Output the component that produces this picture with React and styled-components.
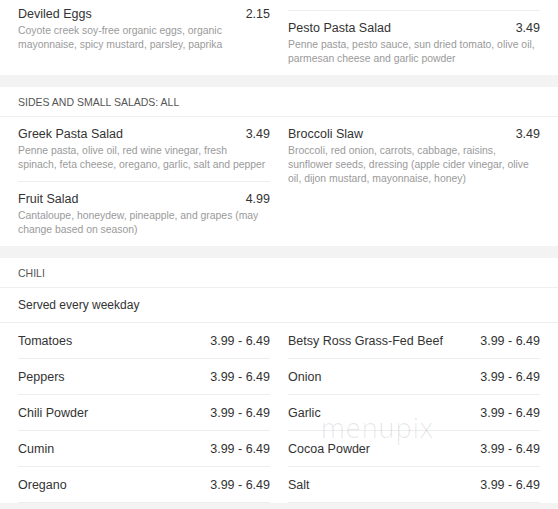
import React from "react";
import styled, { createGlobalStyle } from "styled-components";

const GlobalStyle = createGlobalStyle`
  html, body {
    margin: 0;
    padding: 0;
    background: #f3f3f3;
    font-family: "Liberation Sans", Arial, sans-serif;
    overflow: hidden;
  }
`;

const Page = styled.div`
  margin-top: -98px;
  display: flex;
  flex-direction: column;
  gap: 12px;
`;

const Card = styled.section`
  position: relative;
  background: #fff;
`;

const SectionTitle = styled.div`
  height: 29px;
  padding: 0 18px;
  display: flex;
  align-items: center;
  border-bottom: 1px solid #eeeeee;
  font-size: 10.5px;
  color: #555;
  text-transform: uppercase;
`;

const Note = styled.div`
  height: 34px;
  padding: 0 18px;
  display: flex;
  align-items: center;
  border-bottom: 1px solid #eeeeee;
  font-size: 12px;
  color: #333;
`;

const Columns = styled.div`
  display: grid;
  grid-template-columns: 1fr 1fr;
  column-gap: 18px;
  padding: 0 18px;
`;

const Column = styled.div`
  display: flex;
  flex-direction: column;
`;

const Item = styled.div`
  padding: 9px 0 9px;
  & + & {
    border-top: 1px solid #eeeeee;
  }
`;

const Row = styled.div`
  height: 35px;
  display: flex;
  align-items: center;
  justify-content: space-between;
  border-bottom: 1px solid #eeeeee;
  font-size: 12.5px;
  color: #333;
`;

const ItemHead = styled.div`
  display: flex;
  justify-content: space-between;
  font-size: 12.5px;
  line-height: 16px;
  color: #333;
`;

const Desc = styled.div`
  margin-top: 2px;
  font-size: 10.4px;
  line-height: 14px;
  white-space: pre-line;
  color: #9a9a9a;
`;

const Watermark = styled.div`
  position: absolute;
  left: 321px;
  top: 151px;
  font-family: "Open Sans", "Liberation Sans", sans-serif;
  font-weight: 300;
  font-size: 27px;
  letter-spacing: 1px;
  color: rgba(0, 0, 0, 0.1);
  pointer-events: none;
`;

const MenuItem = ({ name, price, desc }) => (
  <Item>
    <ItemHead>
      <span>{name}</span>
      <span>{price}</span>
    </ItemHead>
    {desc && <Desc>{desc}</Desc>}
  </Item>
);

const chiliLeft = ["Tomatoes", "Peppers", "Chili Powder", "Cumin", "Oregano"];
const chiliRight = ["Betsy Ross Grass-Fed Beef", "Onion", "Garlic", "Cocoa Powder", "Salt"];

export default function App() {
  return (
    <>
      <GlobalStyle />
      <Page>
        <Card>
          <SectionTitle>Salads: All</SectionTitle>
          <Columns>
            <Column>
              <MenuItem
                name="Egg Salad"
                price="3.49"
                desc="Organic eggs, organic mayonnaise, mustard, celery, salt and pepper"
              />
              <MenuItem
                name="Deviled Eggs"
                price="2.15"
                desc={"Coyote creek soy-free organic eggs, organic\nmayonnaise, spicy mustard, parsley, paprika"}
              />
            </Column>
            <Column>
              <MenuItem
                name="Potato Salad"
                price="3.49"
                desc="Red potatoes, organic eggs, celery, red onion, mayonnaise, dijon mustard, dill, salt and pepper, apple cider vinegar, sugar"
              />
              <MenuItem
                name="Pesto Pasta Salad"
                price="3.49"
                desc={"Penne pasta, pesto sauce, sun dried tomato, olive oil,\nparmesan cheese and garlic powder"}
              />
            </Column>
          </Columns>
        </Card>

        <Card>
          <SectionTitle>Sides and Small Salads: All</SectionTitle>
          <Columns>
            <Column>
              <MenuItem
                name="Greek Pasta Salad"
                price="3.49"
                desc={"Penne pasta, olive oil, red wine vinegar, fresh\nspinach, feta cheese, oregano, garlic, salt and pepper"}
              />
              <MenuItem
                name="Fruit Salad"
                price="4.99"
                desc={"Cantaloupe, honeydew, pineapple, and grapes (may\nchange based on season)"}
              />
            </Column>
            <Column>
              <MenuItem
                name="Broccoli Slaw"
                price="3.49"
                desc={"Broccoli, red onion, carrots, cabbage, raisins,\nsunflower seeds, dressing (apple cider vinegar, olive\noil, dijon mustard, mayonnaise, honey)"}
              />
            </Column>
          </Columns>
        </Card>

        <Card>
          <SectionTitle>Chili</SectionTitle>
          <Note>Served every weekday</Note>
          <Columns>
            <Column>
              {chiliLeft.map((n) => (
                <Row key={n}>
                  <span>{n}</span>
                  <span>3.99 - 6.49</span>
                </Row>
              ))}
            </Column>
            <Column>
              {chiliRight.map((n) => (
                <Row key={n}>
                  <span>{n}</span>
                  <span>3.99 - 6.49</span>
                </Row>
              ))}
            </Column>
          </Columns>
          <Watermark>menupix</Watermark>
        </Card>
      </Page>
    </>
  );
}
